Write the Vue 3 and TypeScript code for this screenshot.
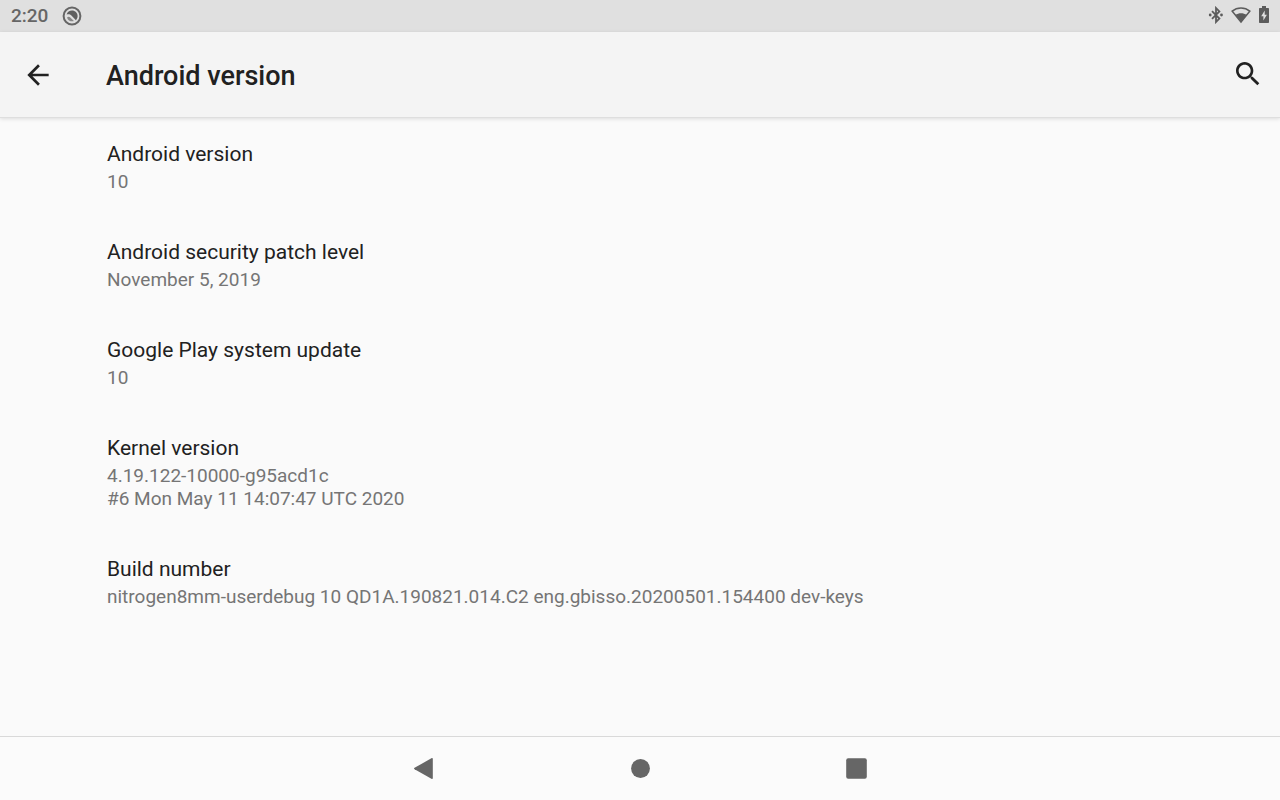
<script setup lang="ts">
interface InfoItem {
  title: string
  lines: string[]
}

const items: InfoItem[] = [
  { title: 'Android version', lines: ['10'] },
  { title: 'Android security patch level', lines: ['November 5, 2019'] },
  { title: 'Google Play system update', lines: ['10'] },
  { title: 'Kernel version', lines: ['4.19.122-10000-g95acd1c', '#6 Mon May 11 14:07:47 UTC 2020'] },
  { title: 'Build number', lines: ['nitrogen8mm-userdebug 10 QD1A.190821.014.C2 eng.gbisso.20200501.154400 dev-keys'] },
]
</script>

<template>
  <div class="screen">
    <div class="status">
      <div class="status-left">
        <time>2:20</time>
        <svg width="20" height="20" viewBox="0 0 20 20" aria-hidden="true">
          <circle cx="10" cy="10" r="8.4" fill="none" stroke="#666" stroke-width="2" />
          <path d="M4.600 8.600C5.300 6.200 7.500 4.600 10 4.600c3.200 0 5.600 2.400 5.600 5.500 0 1.700-.6 3.200-1.700 4.200L9.400 9.400C8 8 6.200 8 4.600 8.600z" fill="#606060" />
          <path d="M5 11.400c1-.9 2.300-1 3.300 0l3.600 3.700c-2.900.9-6-.7-6.900-3.700z" fill="#888" />
        </svg>
      </div>
      <div class="status-right">
        <svg width="16" height="18" viewBox="0 0 16 18" aria-hidden="true">
          <path d="M5 5.200l7.400 7.400L9 16V2l3.400 3.400L5 12.800" fill="none" stroke="#5c5c5c" stroke-width="1.800" />
          <circle cx="3.200" cy="9" r="1.400" fill="#5c5c5c" />
          <circle cx="14.500" cy="9" r="1.400" fill="#5c5c5c" />
        </svg>
        <svg width="20" height="18" viewBox="0 0 20 18" aria-hidden="true">
          <path d="M1.200 5.200C6.200 .9 13.800 .9 18.800 5.200L10 16z" fill="none" stroke="#5c5c5c" stroke-width="1.600" />
          <path d="M4.400 8.800C7.600 6.600 12.400 6.600 15.600 8.800L10 16z" fill="#5c5c5c" />
        </svg>
        <svg width="10" height="18" viewBox="0 0 10 18" aria-hidden="true">
          <path d="M3 0h4v2h2c.6 0 1 .4 1 1v13c0 .6-.4 1-1 1H1c-.6 0-1-.4-1-1V3c0-.6.4-1 1-1h2z" fill="#5c5c5c" />
          <path d="M5.700 4.500v4.300h2.200L4.400 14.600V10.200H2.200z" fill="#e0e0e0" />
        </svg>
      </div>
    </div>

    <header class="bar">
      <button type="button" class="icon-btn" aria-label="Navigate up">
        <svg width="32" height="32" viewBox="0 0 24 24" aria-hidden="true">
          <path d="M20 11H7.830l5.590-5.590L12 4l-8 8 8 8 1.410-1.410L7.830 13H20v-2z" fill="#212121" />
        </svg>
      </button>
      <h1>Android version</h1>
      <button type="button" class="icon-btn search" aria-label="Search settings">
        <svg width="32" height="32" viewBox="0 0 24 24" aria-hidden="true">
          <path d="M15.500 14h-.79l-.28-.27C15.410 12.590 16 11.110 16 9.500 16 5.910 13.090 3 9.500 3S3 5.910 3 9.500 5.910 16 9.500 16c1.610 0 3.090-.59 4.230-1.570l.27.28v.79l5 4.990L20.490 19l-4.990-5zm-6 0C7.010 14 5 11.990 5 9.500S7.010 5 9.500 5 14 7.010 14 9.500 11.990 14 9.500 14z" fill="#212121" />
        </svg>
      </button>
    </header>

    <main>
      <dl>
        <div v-for="item in items" :key="item.title" class="item">
          <dt>{{ item.title }}</dt>
          <dd v-for="line in item.lines" :key="line">{{ line }}</dd>
        </div>
      </dl>
    </main>

    <nav aria-label="System navigation">
      <button type="button" aria-label="Back">
        <svg width="24" height="24" viewBox="0 0 24 24" aria-hidden="true">
          <path d="M2.600 10.800L19.400 1.300c.9-.5 1.400-.2 1.400.7v19c0 .9-.5 1.200-1.400.7L2.600 12.200c-.8-.5-.8-.9 0-1.400z" fill="#666" />
        </svg>
      </button>
      <button type="button" aria-label="Home">
        <svg width="24" height="24" viewBox="0 0 24 24" aria-hidden="true">
          <circle cx="12.500" cy="11.500" r="9.400" fill="#666" />
        </svg>
      </button>
      <button type="button" aria-label="Overview">
        <svg width="24" height="24" viewBox="0 0 24 24" aria-hidden="true">
          <rect x="2.200" y="1.200" width="20.600" height="20.600" rx="2" fill="#666" />
        </svg>
      </button>
    </nav>
  </div>
</template>

<style>
body {
  margin: 0;
  background: #fafafa;
}
</style>

<style scoped>
.screen {
  display: flex;
  flex-direction: column;
  min-height: 100vh;
  background: #fafafa;
  color: #212121;
  font-family: Roboto, "Liberation Sans", sans-serif;
}
svg {
  display: block;
}
button {
  display: flex;
  align-items: center;
  justify-content: center;
  padding: 0;
  border: 0;
  background: none;
}
.status {
  display: flex;
  align-items: center;
  justify-content: space-between;
  height: 32px;
  padding: 0 11px;
  background: #e0e0e0;
}
.status-left {
  display: flex;
  align-items: center;
  gap: 14px;
  color: #666;
  font-size: 19px;
  font-weight: 500;
  line-height: 32px;
}
.status-right {
  display: flex;
  align-items: center;
  gap: 8px;
  padding-bottom: 2px;
}
.bar {
  display: flex;
  align-items: center;
  height: 85px;
  padding: 0 16px 0 22px;
  border-bottom: 1px solid #dedede;
  background: #f4f4f4;
  box-shadow: 0 1px 4px rgba(0, 0, 0, 0.12);
}
.icon-btn {
  width: 32px;
  height: 32px;
}
.search {
  margin-left: auto;
  margin-bottom: 2px;
}
h1 {
  margin: 0 0 0 52px;
  padding-top: 2px;
  font-size: 27px;
  font-weight: 500;
  line-height: 32px;
}
main {
  flex: 1;
}
dl {
  margin: 0;
}
.item {
  padding: 23px 107px;
}
dt {
  margin-bottom: 3px;
  font-size: 21px;
  line-height: 26px;
}
dd {
  margin: 0;
  color: #757575;
  font-size: 19px;
  line-height: 23px;
}
nav {
  display: flex;
  align-items: center;
  justify-content: center;
  gap: 120px;
  height: 63px;
  border-top: 1px solid #d9d9d9;
  background: #fbfbfb;
}
nav button {
  width: 96px;
  height: 63px;
}
</style>
